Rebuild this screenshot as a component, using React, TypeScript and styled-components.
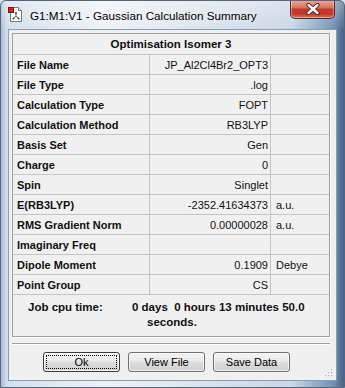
import React from "react";
import styled, { createGlobalStyle } from "styled-components";

const Global = createGlobalStyle`
  html, body { margin: 0; padding: 0; background: #d6e0ea; }
  body { font-family: "Liberation Sans", Arial, sans-serif; }
  * { box-sizing: border-box; }
`;

const Window = styled.div`
  position: relative;
  width: 345px;
  height: 388px;
  display: flex;
  flex-direction: column;
  border: 1px solid #56667a;
  border-radius: 6px 6px 0 0;
  background:
    linear-gradient(180deg, rgba(255,255,255,0.35) 0px, rgba(255,255,255,0) 30px),
    linear-gradient(90deg, #a9bed6 0px, #d3dfeb 6px, #eef2f7 30%, #d8e2ec 62%, #c9d6e4 85%, #6f8fb4 97%, #45638a 100%);
  overflow: hidden;
`;

const TitleBar = styled.div`
  height: 28px;
  display: flex;
  align-items: flex-start;
  flex-shrink: 0;
`;

const AppIcon = styled.svg`
  width: 16px;
  height: 16px;
  margin: 5px 0 0 7px;
  flex-shrink: 0;
`;

const Title = styled.span`
  margin: 8px 0 0 6px;
  font-size: 11.7px;
  color: #000;
  text-shadow: 0 0 6px rgba(255,255,255,0.9);
  white-space: nowrap;
`;

const CloseButton = styled.div`
  margin: -1px 9px 0 auto;
  width: 45px;
  height: 19px;
  border: 1px solid #5a2a24;
  border-top: none;
  border-radius: 0 0 5px 5px;
  background: linear-gradient(180deg, #eaa99b 0%, #d87a68 40%, #c2392a 52%, #c03a2c 78%, #d9765f 100%);
  box-shadow: inset 0 0 0 1px rgba(255,255,255,0.35);
  display: flex;
  align-items: center;
  justify-content: center;
`;

const CloseGlyph = styled.svg`
  width: 14px;
  height: 12px;
`;

const Client = styled.div`
  position: relative;
  flex: 1;
  margin: 0 7px 6px 7px;
  background: #f0f0f0;
  border: 1px solid #8b9db2;
  padding: 3px 6px 0 3px;
  display: flex;
  flex-direction: column;
`;

const GroupBox = styled.div`
  border: 1px solid #a0a0a0;
  box-shadow: 1px 1px 0 #ffffff;
  display: flex;
  flex-direction: column;
`;

const Header = styled.div`
  height: 21px;
  border-bottom: 1px solid #c4c4c4;
  display: flex;
  align-items: center;
  justify-content: center;
  font-weight: bold;
  font-size: 11.5px;
  color: #111;
`;

const Row = styled.div`
  height: 20px;
  display: grid;
  grid-template-columns: 137px 121px 1fr;
  border-bottom: 1px solid #c4c4c4;
`;

const Cell = styled.div<{ $align?: "left" | "right"; $bold?: boolean; $last?: boolean }>`
  display: flex;
  align-items: center;
  justify-content: ${(p) => (p.$align === "right" ? "flex-end" : "flex-start")};
  padding: ${(p) => (p.$align === "right" ? "0 2px 0 0" : p.$bold ? "0 0 0 4px" : "0 0 0 5px")};
  border-right: ${(p) => (p.$last ? "none" : "1px solid #c4c4c4")};
  font-size: 11px;
  font-weight: ${(p) => (p.$bold ? "bold" : "normal")};
  color: #111;
  white-space: nowrap;
`;

const CpuSection = styled.div`
  height: 41px;
  display: grid;
  grid-template-columns: 104px 1fr;
  padding: 5px 0 0 15px;
  font-weight: bold;
  font-size: 11.5px;
  line-height: 15px;
  color: #111;
`;

const CpuLine = styled.div<{ $indent?: number }>`
  white-space: pre;
  padding-left: ${(p) => p.$indent ?? 0}px;
`;

const Separator = styled.div`
  margin-top: 6px;
  height: 2px;
  border-top: 1px solid #a0a0a0;
  border-bottom: 1px solid #ffffff;
`;

const ButtonRow = styled.div`
  display: flex;
  gap: 8px;
  padding-left: 31px;
  margin-top: 7px;
`;

const Button = styled.button<{ $default?: boolean }>`
  width: 77px;
  height: 20px;
  padding: 0;
  position: relative;
  border: 1px solid ${(p) => (p.$default ? "#3c3c3c" : "#707070")};
  border-radius: 3px;
  background: linear-gradient(180deg, #f2f2f2 0%, #ebebeb 45%, #dddddd 50%, #cfcfcf 100%);
  box-shadow: inset 0 0 0 1px rgba(255,255,255,0.7);
  font-family: "Liberation Sans", Arial, sans-serif;
  font-size: 11px;
  color: #000;
  display: flex;
  align-items: center;
  justify-content: center;
`;

const FocusRing = styled.span`
  position: absolute;
  inset: 2px;
  border: 1px dotted #000;
`;

const Grip = styled.svg`
  position: absolute;
  right: 3px;
  bottom: 3px;
  width: 10px;
  height: 10px;
`;

const rows: [string, string, string][] = [
  ["File Name", "JP_Al2Cl4Br2_OPT3", ""],
  ["File Type", ".log", ""],
  ["Calculation Type", "FOPT", ""],
  ["Calculation Method", "RB3LYP", ""],
  ["Basis Set", "Gen", ""],
  ["Charge", "0", ""],
  ["Spin", "Singlet", ""],
  ["E(RB3LYP)", "-2352.41634373", "a.u."],
  ["RMS Gradient Norm", "0.00000028", "a.u."],
  ["Imaginary Freq", "", ""],
  ["Dipole Moment", "0.1909", "Debye"],
  ["Point Group", "CS", ""],
];

export default function App() {
  return (
    <>
      <Global />
      <Window>
        <TitleBar>
          <AppIcon viewBox="0 0 16 16">
            <path d="M2.5 1.5 H10.5 L13.5 4.5 V15.5 H2.5 Z" fill="#ffffff" stroke="#7a7a7a" />
            <path d="M10.5 1.5 V4.5 H13.5" fill="#e6e6e6" stroke="#7a7a7a" />
            <rect x="0.5" y="1.5" width="5" height="5" fill="#e0201a" stroke="#8a1010" />
            <path d="M8 7 L8 10 M8 10 L5.5 12.5 M8 10 L10.5 12.5" stroke="#606060" strokeWidth="1" />
            <circle cx="8" cy="7" r="1" fill="#404040" />
            <circle cx="5.5" cy="12.5" r="1" fill="#404040" />
            <circle cx="10.5" cy="12.5" r="1" fill="#404040" />
          </AppIcon>
          <Title>G1:M1:V1 - Gaussian Calculation Summary</Title>
          <CloseButton>
            <CloseGlyph viewBox="0 0 14 12">
              <path d="M2.5 2 L11.5 10 M11.5 2 L2.5 10" stroke="#4a1a14" strokeWidth="4.2" strokeLinecap="round" />
              <path d="M2.5 2 L11.5 10 M11.5 2 L2.5 10" stroke="#ffffff" strokeWidth="2.4" strokeLinecap="round" />
            </CloseGlyph>
          </CloseButton>
        </TitleBar>
        <Client>
          <GroupBox>
            <Header>Optimisation Isomer 3</Header>
            {rows.map(([label, value, unit]) => (
              <Row key={label}>
                <Cell $bold>{label}</Cell>
                <Cell $align="right">{value}</Cell>
                <Cell $last>{unit}</Cell>
              </Row>
            ))}
            <CpuSection>
              <CpuLine>Job cpu time:</CpuLine>
              <div>
                <CpuLine>0 days  0 hours 13 minutes 50.0</CpuLine>
                <CpuLine $indent={15}>seconds.</CpuLine>
              </div>
            </CpuSection>
          </GroupBox>
          <Separator />
          <ButtonRow>
            <Button $default>
              <FocusRing />
              Ok
            </Button>
            <Button>View File</Button>
            <Button>Save Data</Button>
          </ButtonRow>
          <Grip viewBox="0 0 10 10">
            {[
              [8, 2],
              [8, 5],
              [5, 5],
              [8, 8],
              [5, 8],
              [2, 8],
            ].map(([x, y], i) => (
              <rect key={i} x={x} y={y} width="1.2" height="1.2" fill="#b0b0b0" />
            ))}
          </Grip>
        </Client>
      </Window>
    </>
  );
}
